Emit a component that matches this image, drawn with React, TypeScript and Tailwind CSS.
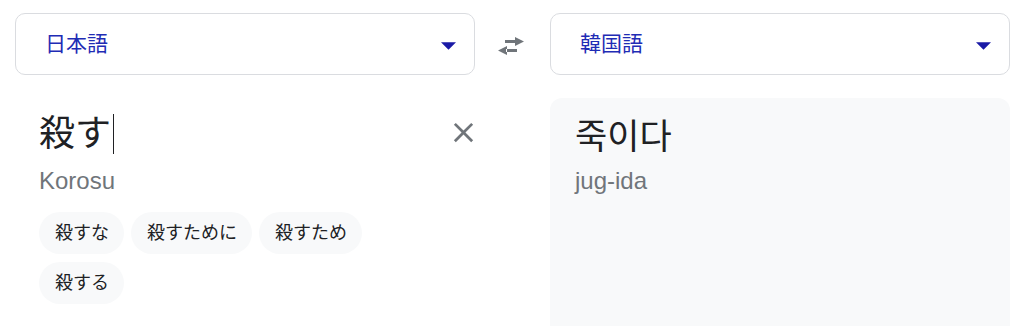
import React from 'react'

const sans = '"Liberation Sans", "Noto Sans CJK JP", Arial, sans-serif'
const cjk = '"Liberation Sans", "Noto Sans CJK JP", "Noto Sans CJK KR", sans-serif'

function Caret() {
    return (
        <svg width="15" height="8" viewBox="7 10 10 5" className="block">
            <path d="M7 10l5 5 5-5z" fill="#1a1aa6" />
        </svg>
    )
}

function SwapIcon() {
    return (
        <svg width="28" height="18" viewBox="0 0 28 18" className="block">
            <path d="M8 3h11v3H8z M18 0l9 4.5-9 4.5z" fill="#70757a" />
            <path d="M9 12h11v3H9z M10 9L1 13.5 10 18z" fill="#70757a" />
        </svg>
    )
}

function CloseIcon() {
    return (
        <svg width="33" height="33" viewBox="0 0 24 24" className="block">
            <path
                d="M19 6.41L17.59 5 12 10.59 6.41 5 5 6.41 10.59 12 5 17.59 6.41 19 12 13.41 17.59 19 19 17.59 13.41 12z"
                fill="#70757a"
            />
        </svg>
    )
}

function LanguageSelect({ label }: { label: string }) {
    return (
        <div className="w-[460px] h-[62px] border border-[#dadce0] rounded-[10px] flex items-center justify-between pl-[29px] pr-[18px]">
            <span className="text-[21px] text-[#1f2cb5]" style={{ fontFamily: cjk }}>
                {label}
            </span>
            <div className="pt-[4px]">
                <Caret />
            </div>
        </div>
    )
}

const suggestions = ['殺すな', '殺すために', '殺すため', '殺する']

export default function App() {
    return (
        <div className="w-[1024px] h-[326px] bg-white overflow-hidden flex flex-col" style={{ fontFamily: sans }}>
            {/* language bar */}
            <div className="flex items-center pl-[15px] pt-[13px]">
                <LanguageSelect label="日本語" />
                <div className="w-[75px] flex justify-center pr-[3px] pt-[3px]">
                    <SwapIcon />
                </div>
                <LanguageSelect label="韓国語" />
            </div>

            {/* panels */}
            <div className="flex flex-1 pl-[15px] mt-[23px]">
                <div className="w-[460px] pl-[24px] pt-[12px]">
                    <div className="flex items-start justify-between">
                        <div className="flex items-center h-[48px]">
                            <span className="text-[36px] leading-[48px] text-[#202124]" style={{ fontFamily: cjk }}>
                                殺す
                            </span>
                            <span className="ml-[2px] w-px h-[40px] bg-[#202124]" />
                        </div>
                        <div className="mt-[6px] mr-[-5px]">
                            <CloseIcon />
                        </div>
                    </div>
                    <div className="text-[24px] leading-[32px] text-[#70757a] mt-[7px]">Korosu</div>
                    <div className="flex flex-wrap gap-x-[7px] gap-y-[8px] mt-[15px] w-[340px]">
                        {suggestions.map((s) => (
                            <div
                                key={s}
                                className="h-[42px] pl-[16px] pr-[15px] rounded-full bg-[#f8f9fa] flex items-center text-[18px] text-[#202124]"
                                style={{ fontFamily: cjk }}
                            >
                                {s}
                            </div>
                        ))}
                    </div>
                </div>
                <div className="w-[75px]" />
                <div className="w-[460px] bg-[#f8f9fa] rounded-t-[12px] pl-[25px] pt-[12px]">
                    <div
                        className="text-[35px] leading-[48px] text-[#202124]"
                        style={{ fontFamily: '"Noto Sans CJK KR", sans-serif' }}
                    >
                        죽이다
                    </div>
                    <div className="text-[24px] leading-[32px] text-[#70757a] mt-[7px]">jug-ida</div>
                </div>
            </div>
        </div>
    )
}
